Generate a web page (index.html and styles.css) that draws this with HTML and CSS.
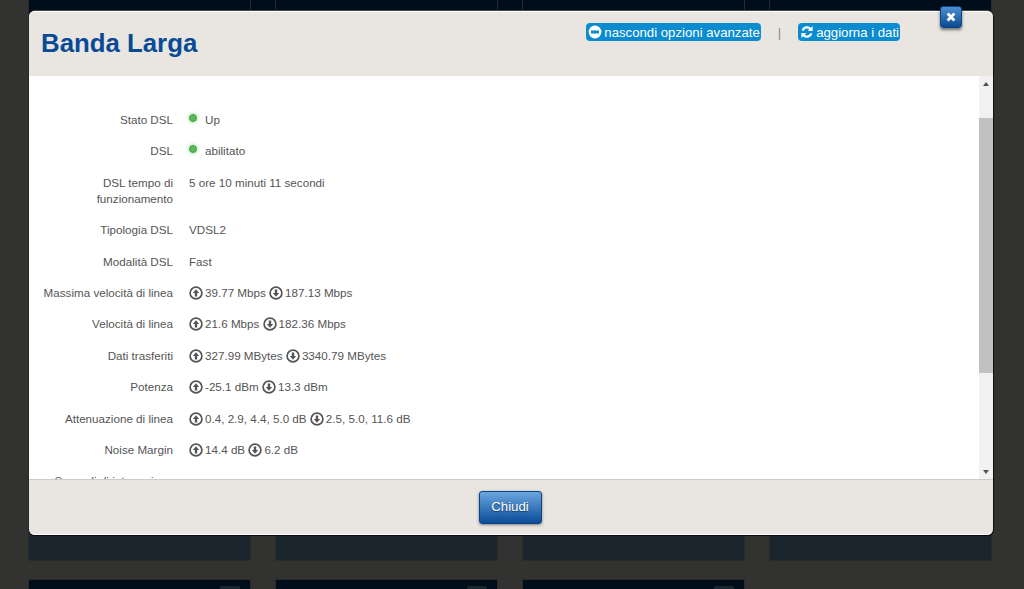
FILE: index.html
```html
<!DOCTYPE html>
<html lang="it">
<head>
    <meta charset="UTF-8">
    <title>Banda Larga</title>
    <link rel="stylesheet" href="styles.css">
</head>
<body>
    <div class="tiles">
        <div class="tile tile-top"></div>
        <div class="tile tile-top"></div>
        <div class="tile tile-top"></div>
        <div class="tile tile-top"></div>
        <div class="tile tile-head"><span class="tile-tab"></span></div>
        <div class="tile tile-head"><span class="tile-tab"></span></div>
        <div class="tile tile-head"><span class="tile-tab"></span></div>
    </div>

    <div class="modal">
        <a class="modal-close" href="#">
            <svg width="10" height="10" viewBox="0 0 10 10"><path d="M1.6 1.6l6.8 6.8M8.4 1.6l-6.8 6.8" stroke="#fff" stroke-width="2.8" fill="none"/></svg>
        </a>
        <header class="modal-header">
            <h1>Banda Larga</h1>
            <div class="header-links">
                <a class="pill" href="#">
                    <svg class="pill-icon" viewBox="0 0 14 14"><circle cx="7" cy="7" r="6.4" fill="#fff"/><rect x="3" y="5.5" width="8" height="3" fill="#0b8bd0"/></svg>
                    nascondi opzioni avanzate
                </a>
                <span class="divider">|</span>
                <a class="pill" href="#">
                    <svg class="pill-icon" viewBox="0 0 14 14"><path d="M2.6 5.6A4.6 4.6 0 0 1 10.4 3.8" stroke="#fff" stroke-width="2.2" fill="none"/><path d="M12.6 1v5h-5z" fill="#fff"/><path d="M11.4 8.4A4.6 4.6 0 0 1 3.6 10.2" stroke="#fff" stroke-width="2.2" fill="none"/><path d="M1.4 13V8h5z" fill="#fff"/></svg>
                    aggiorna i dati
                </a>
            </div>
        </header>

        <div class="modal-body">
            <div class="scroll-content">
                <div class="row">
                    <div class="label">Stato DSL</div>
                    <div class="value"><span class="led"></span>Up</div>
                </div>
                <div class="row">
                    <div class="label">DSL</div>
                    <div class="value"><span class="led"></span>abilitato</div>
                </div>
                <div class="row">
                    <div class="label">DSL tempo di funzionamento</div>
                    <div class="value">5 ore 10 minuti 11 secondi</div>
                </div>
                <div class="row">
                    <div class="label">Tipologia DSL</div>
                    <div class="value">VDSL2</div>
                </div>
                <div class="row">
                    <div class="label">Modalità DSL</div>
                    <div class="value">Fast</div>
                </div>
                <div class="row">
                    <div class="label">Massima velocità di linea</div>
                    <div class="value">
                        <svg class="arrow" viewBox="0 0 14 14"><use href="#arrow-up"/></svg>39.77 Mbps
                        <svg class="arrow" viewBox="0 0 14 14"><use href="#arrow-down"/></svg>187.13 Mbps
                    </div>
                </div>
                <div class="row">
                    <div class="label">Velocità di linea</div>
                    <div class="value">
                        <svg class="arrow" viewBox="0 0 14 14"><use href="#arrow-up"/></svg>21.6 Mbps
                        <svg class="arrow" viewBox="0 0 14 14"><use href="#arrow-down"/></svg>182.36 Mbps
                    </div>
                </div>
                <div class="row">
                    <div class="label">Dati trasferiti</div>
                    <div class="value">
                        <svg class="arrow" viewBox="0 0 14 14"><use href="#arrow-up"/></svg>327.99 MBytes
                        <svg class="arrow" viewBox="0 0 14 14"><use href="#arrow-down"/></svg>3340.79 MBytes
                    </div>
                </div>
                <div class="row">
                    <div class="label">Potenza</div>
                    <div class="value">
                        <svg class="arrow" viewBox="0 0 14 14"><use href="#arrow-up"/></svg>-25.1 dBm
                        <svg class="arrow" viewBox="0 0 14 14"><use href="#arrow-down"/></svg>13.3 dBm
                    </div>
                </div>
                <div class="row">
                    <div class="label">Attenuazione di linea</div>
                    <div class="value">
                        <svg class="arrow" viewBox="0 0 14 14"><use href="#arrow-up"/></svg>0.4, 2.9, 4.4, 5.0 dB
                        <svg class="arrow" viewBox="0 0 14 14"><use href="#arrow-down"/></svg>2.5, 5.0, 11.6 dB
                    </div>
                </div>
                <div class="row">
                    <div class="label">Noise Margin</div>
                    <div class="value">
                        <svg class="arrow" viewBox="0 0 14 14"><use href="#arrow-up"/></svg>14.4 dB
                        <svg class="arrow" viewBox="0 0 14 14"><use href="#arrow-down"/></svg>6.2 dB
                    </div>
                </div>
                <div class="row">
                    <div class="label">Secondi di interruzione</div>
                    <div class="value"></div>
                </div>
            </div>
            <div class="scrollbar">
                <span class="scroll-arrow scroll-up"></span>
                <div class="scroll-track"><div class="scroll-thumb"></div></div>
                <span class="scroll-arrow scroll-down"></span>
            </div>
        </div>

        <footer class="modal-footer">
            <a class="btn-close" href="#">Chiudi</a>
        </footer>
    </div>

    <svg class="icon-defs" width="0" height="0">
        <defs>
            <g id="arrow-up">
                <circle cx="7" cy="7" r="5.9" fill="none" stroke="#555" stroke-width="1.7"/>
                <path d="M7 3.2L10.2 7H8.2v3.6H5.8V7H3.8z" fill="#555"/>
            </g>
            <g id="arrow-down">
                <circle cx="7" cy="7" r="5.9" fill="none" stroke="#555" stroke-width="1.7"/>
                <path d="M7 10.8L10.2 7H8.2V3.4H5.8V7H3.8z" fill="#555"/>
            </g>
        </defs>
    </svg>
</body>
</html>
```

FILE: styles.css
```css
* {
    box-sizing: border-box;
}

html, body {
    height: 100%;
}

body {
    margin: 0;
    background-color: #323230;
    font-family: 'Liberation Sans', Arial, sans-serif;
    font-size: 11.65px;
    color: #555;
    overflow: hidden;
}

a {
    text-decoration: none;
}

/* page behind the dialog */
.tiles {
    display: grid;
    grid-template-columns: repeat(4, 223px);
    grid-auto-rows: 561px;
    column-gap: 24px;
    row-gap: 18px;
    width: 964px;
    height: 589px;
    margin-left: 28px;
    overflow: hidden;
    background: linear-gradient(#000d1a, #000d1a) top / 100% 12px no-repeat;
}

.tile {
    background-color: #1a252d;
    border: 1px solid #2a2a28;
}

.tile-head {
    background-color: #000d1a;
    display: flex;
    justify-content: flex-end;
    padding-right: 10px;
    padding-top: 6px;
}

.tile-top {
    border-top: none;
    background: linear-gradient(#000d1a 0, #000d1a 12px, #1a252d 12px);
}

.tile-tab {
    width: 20px;
    height: 10px;
    background-color: #1a252d;
    border-radius: 2px 2px 0 0;
}

/* dialog */
.modal {
    position: absolute;
    left: 29px;
    top: 11px;
    width: 964px;
    height: 524px;
    display: flex;
    flex-direction: column;
    background-color: #e9e6e1;
    border-radius: 6px;
    box-shadow: inset 0 1px 0 #fff, 0 1px 0 #0b0b0b, 1px 1px 0 #111, 0 -1px 0 #444;
}

.modal-close {
    position: absolute;
    top: -5px;
    right: 31px;
    width: 22px;
    height: 22px;
    display: flex;
    align-items: center;
    justify-content: center;
    background: linear-gradient(#4d8fd0, #0b4a92);
    border: 1px solid #0a4386;
    border-radius: 3px;
    box-shadow: 0 2px 3px rgba(0,0,0,0.5);
}

.modal-header {
    height: 65px;
    flex: none;
    display: flex;
    justify-content: space-between;
    align-items: flex-start;
    padding: 0 93px 0 12px;
}

h1 {
    margin: 16px 0 0;
    font-size: 25.8px;
    line-height: 32px;
    font-weight: bold;
    color: #094a97;
}

.header-links {
    display: flex;
    align-items: center;
    margin-top: 12px;
    font-size: 13.2px;
}

.pill {
    display: flex;
    align-items: center;
    gap: 2px;
    height: 18px;
    padding: 0 1px 0 2px;
    background-color: #0b8bd0;
    border-radius: 4px;
    color: #fff;
    white-space: nowrap;
}

.pill-icon {
    width: 14px;
    height: 14px;
}

.divider {
    margin: 0 17px;
    color: #888;
    font-size: 13px;
}

.modal-body {
    flex: 1;
    min-height: 0;
    display: flex;
    background-color: #fff;
    border-bottom: 1px solid #cfccc7;
}

.scroll-content {
    flex: 1;
    overflow: hidden;
    padding-top: 36px;
}

.row {
    display: flex;
    line-height: 16px;
    margin-bottom: 15.4px;
}

.label {
    width: 144px;
    flex: none;
    text-align: right;
}

.value {
    margin-left: 16px;
    white-space: nowrap;
}

.led {
    display: inline-block;
    width: 8px;
    height: 8px;
    margin: 0 8px 0 0;
    vertical-align: 2px;
    border-radius: 50%;
    background-color: #5cb85c;
    border: 1px solid #4aa04a;
    box-shadow: 0 0 4px #8fe08f;
}

.arrow {
    width: 14px;
    height: 14px;
    margin-right: 2px;
    vertical-align: -3px;
}

.icon-defs {
    position: absolute;
}

/* scrollbar */
.scrollbar {
    width: 14px;
    flex: none;
    display: flex;
    flex-direction: column;
    background-color: #f1f1f1;
}

.scroll-arrow {
    height: 15px;
    flex: none;
    display: flex;
    align-items: center;
    justify-content: center;
}

.scroll-arrow::before {
    content: '';
    border-left: 3.5px solid transparent;
    border-right: 3.5px solid transparent;
}

.scroll-up::before {
    border-bottom: 4px solid #505050;
}

.scroll-down::before {
    border-top: 4px solid #505050;
}

.scroll-track {
    flex: 1;
    padding-top: 27px;
}

.scroll-thumb {
    height: 255px;
    background-color: #c1c1c1;
}

.modal-footer {
    height: 55px;
    flex: none;
    display: flex;
    justify-content: center;
    align-items: flex-start;
    padding-top: 11px;
    padding-right: 2px;
    border-bottom: 1px solid #fff;
    border-radius: 0 0 6px 6px;
}

.btn-close {
    display: block;
    width: 63px;
    height: 33px;
    line-height: 29px;
    text-align: center;
    font-size: 13.2px;
    color: #fff;
    background: linear-gradient(#6ba6de, #0a4c99);
    border: 1px solid #0a4386;
    border-radius: 3px;
    box-shadow: 0 1px 3px rgba(0,0,0,0.45);
    text-shadow: 0 1px 1px rgba(0,0,0,0.5);
}
```
